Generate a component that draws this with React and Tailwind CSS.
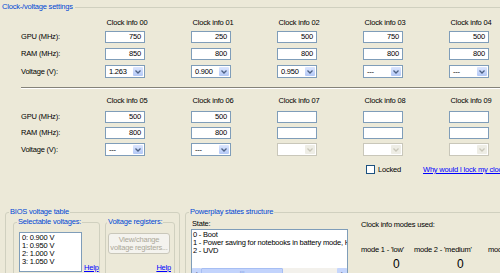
import React from 'react';

const row1 = [
  { id: '00', gpu: '750', ram: '850', volt: '1.263' },
  { id: '01', gpu: '250', ram: '800', volt: '0.900' },
  { id: '02', gpu: '500', ram: '800', volt: '0.950' },
  { id: '03', gpu: '750', ram: '800', volt: '---' },
  { id: '04', gpu: '500', ram: '800', volt: '---' },
];

const row2 = [
  { id: '05', gpu: '500', ram: '800', volt: '---' },
  { id: '06', gpu: '500', ram: '800', volt: '---' },
  { id: '07', gpu: '', ram: '', volt: '', off: true },
  { id: '08', gpu: '', ram: '', volt: '', off: true },
  { id: '09', gpu: '', ram: '', volt: '', off: true },
];

const voltages = ['0: 0.900 V', '1: 0.950 V', '2: 1.000 V', '3: 1.050 V'];
const states = ['0 - Boot', '1 - Power saving for notebooks in battery mode, High performance', '2 - UVD'];

const Chevron = ({ color }) => (
  <svg width="6" height="4" viewBox="0 0 6 4">
    <path d="M0.5 0.5 L3 3 L5.5 0.5" fill="none" stroke={color} strokeWidth="1.3" />
  </svg>
);

const NumBox = ({ value }) => (
  <div className="h-[12px] w-[40px] border border-[#7F9DB9] bg-white pr-[3px] text-right leading-[10px]">{value}</div>
);

const Combo = ({ value, off }) => (
  <div className={`flex h-[13px] w-[40px] border bg-white ${off ? 'border-[#C9C7BA]' : 'border-[#7F9DB9]'}`}>
    <div className="flex-1 pl-[3px] leading-[11px]">{value}</div>
    <div className={`m-[1px] flex w-[10px] items-center justify-center rounded-[1px] ${off ? 'bg-[#EEEDE5]' : 'bg-gradient-to-b from-[#DCE6FE] to-[#B3C8F6]'}`}>
      <Chevron color={off ? '#C9C7BA' : '#4D6185'} />
    </div>
  </div>
);

const Block = ({ cols, headMt, rowsMt, gap }) => (
  <div className="pl-[21px]">
    <div className="flex h-[8px] leading-[8px]" style={{ marginTop: headMt }}>
      <div className="w-[84px]" />
      <div className="flex gap-[46px]">
        {cols.map((c) => (
          <div key={c.id} className="flex w-[40px] justify-center whitespace-nowrap pl-[4px]">Clock info {c.id}</div>
        ))}
      </div>
    </div>
    <div className="flex flex-col" style={{ marginTop: rowsMt, gap }}>
      <div className="flex items-center">
        <div className="w-[84px] whitespace-nowrap">GPU (MHz):</div>
        <div className="flex gap-[46px]">{cols.map((c) => <NumBox key={c.id} value={c.gpu} />)}</div>
      </div>
      <div className="flex items-center">
        <div className="w-[84px] whitespace-nowrap">RAM (MHz):</div>
        <div className="flex gap-[46px]">{cols.map((c) => <NumBox key={c.id} value={c.ram} />)}</div>
      </div>
      <div className="flex items-center">
        <div className="w-[84px] whitespace-nowrap">Voltage (V):</div>
        <div className="flex gap-[46px]">{cols.map((c) => <Combo key={c.id} value={c.volt} off={c.off} />)}</div>
      </div>
    </div>
  </div>
);

export default function App() {
  return (
    <div className="h-[273px] w-[500px] overflow-hidden bg-[#ECE9D8] font-['Liberation_Sans',Arial,sans-serif] text-[7.5px] tracking-[-0.2px] text-black">
      <fieldset className="mt-[2px] min-w-0 border-t border-[#D0D0BF]">
        <legend className="ml-0 px-[2px] leading-[10px] text-[#0046D5]">Clock-/voltage settings</legend>
        <Block cols={row1} headMt="7px" rowsMt="4px" gap="5px" />
        <div className="ml-[21px] mt-[9px] h-[2px] border-t border-b border-t-[#85837A] border-b-white" />
        <Block cols={row2} headMt="8px" rowsMt="6px" gap="4px" />
        <div className="mt-[9px] flex h-[9px] items-center pl-[366px]">
          <div className="flex w-[57px] shrink-0 items-center gap-[3px]">
            <div className="h-[9px] w-[9px] border border-[#1C5180] bg-white" />
            <span>Locked</span>
          </div>
          <span className="whitespace-nowrap text-[#0000FF] underline">Why would I lock my clock infos?</span>
        </div>
      </fieldset>

      <div className="mt-[33px] flex gap-[5px] pl-[5px]">
        <fieldset className="h-[80px] w-[175px] min-w-0 shrink-0 rounded-[3px] border border-[#D0D0BF]">
          <legend className="ml-[3px] px-[1px] leading-[10px] text-[#0046D5]">BIOS voltage table</legend>
          <div className="flex gap-[5px] pl-[7px]">
            <fieldset className="h-[70px] w-[87px] min-w-0 shrink-0 rounded-[3px] border border-[#D0D0BF]">
              <legend className="ml-[3px] px-[1px] leading-[10px] text-[#0046D5]">Selectable voltages:</legend>
              <div className="mt-[5px] flex items-end pl-[5px]">
                <div className="h-[40px] w-[63px] border border-[#7F9DB9] bg-white pl-[2px] pt-[1px] leading-[8px]">
                  {voltages.map((v) => <div key={v}>{v}</div>)}
                </div>
                <span className="ml-[2px] leading-[8px] text-[#0000FF] underline">Help</span>
              </div>
            </fieldset>
            <fieldset className="h-[70px] w-[70px] min-w-0 shrink-0 rounded-[3px] border border-[#D0D0BF]">
              <legend className="ml-[1px] px-[1px] leading-[10px] text-[#0046D5]">Voltage registers:</legend>
              <div className="ml-[2px] mt-[6px] flex h-[21px] w-[62px] flex-col items-center justify-center rounded-[3px] border border-[#C9C7BA] bg-[#F4F3EE] leading-[8px] text-[#ACA899]">
                <span>View/change</span>
                <span>voltage registers...</span>
              </div>
              <div className="mt-[10px] flex justify-end pr-[3px] leading-[8px]">
                <span className="text-[#0000FF] underline">Help</span>
              </div>
            </fieldset>
          </div>
        </fieldset>

        <fieldset className="h-[80px] w-[330px] min-w-0 shrink-0 rounded-[3px] border border-[#D0D0BF]">
          <legend className="ml-[3px] px-[1px] leading-[10px] text-[#0046D5]">Powerplay states structure</legend>
          <div className="flex">
            <div className="w-[162px] shrink-0 pl-[5px]">
              <div className="mt-[3px] pl-[1px] leading-[8px]">State:</div>
              <div className="mt-[1px] flex h-[52px] flex-col border border-[#7F9DB9] bg-white">
                <div className="h-[38px] overflow-hidden whitespace-nowrap pl-[1px] pt-[1px] leading-[8px]">
                  {states.map((s) => <div key={s}>{s}</div>)}
                </div>
                <div className="flex h-[11px] bg-[#F3F1EC]">
                  <div className="flex w-[9px] items-center justify-center rounded-[1px] bg-[#C6D6FC] text-[#4D6185]">‹</div>
                  <div className="flex w-[82px] items-center justify-center rounded-[1px] border border-[#A6BEF3] bg-[#C2D3FC] text-[#8AA6E6]">|||</div>
                  <div className="flex-1" />
                  <div className="flex w-[10px] items-center justify-center rounded-[1px] bg-[#C6D6FC] text-[#4D6185]">›</div>
                </div>
              </div>
            </div>
            <div className="ml-[13px] whitespace-nowrap">
              <div className="mt-[4px] leading-[8px]">Clock info modes used:</div>
              <div className="mt-[17px] flex leading-[8px]">
                <div className="w-[53px] shrink-0">mode 1 - 'low'</div>
                <div className="w-[74px] shrink-0">mode 2 - 'medium'</div>
                <div className="shrink-0">mode 3 - 'high'</div>
              </div>
              <div className="mt-[4px] flex text-[12px] leading-[12px]">
                <div className="w-[53px] shrink-0 pl-[32px]">0</div>
                <div className="w-[74px] shrink-0 pl-[43px]">0</div>
                <div className="shrink-0 pl-[40px]">0</div>
              </div>
            </div>
          </div>
        </fieldset>
      </div>
    </div>
  );
}
